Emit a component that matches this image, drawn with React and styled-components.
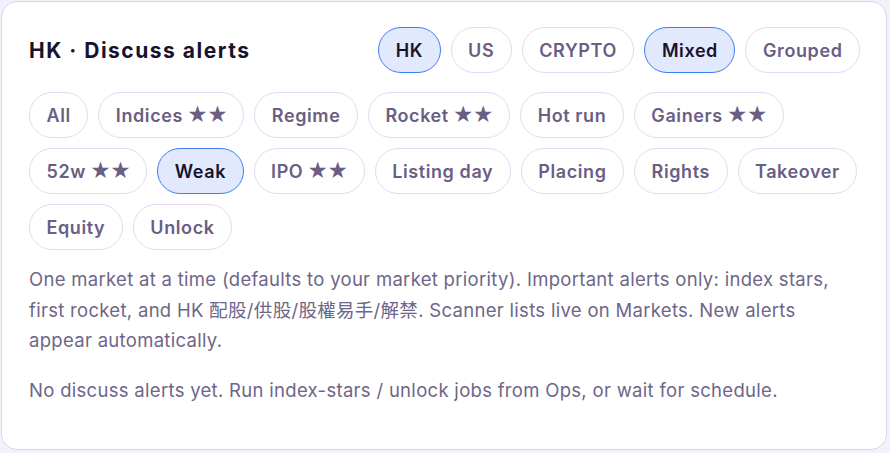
import React, { useState } from "react";
import styled, { createGlobalStyle } from "styled-components";

const colors = {
  page: "#f4f1fb",
  card: "#ffffff",
  cardBorder: "#ddd3f1",
  title: "#17132f",
  chipText: "#6a5e84",
  chipBorder: "#e3daf3",
  activeBg: "#e2e9fd",
  activeBorder: "#3d7ef5",
  activeText: "#17132f",
  body: "#6e6688",
};

const GlobalStyle = createGlobalStyle`
  html, body {
    margin: 0;
    padding: 0;
    background: ${colors.page};
  }
  body {
    padding: 1px 3px 3px 1px;
    font-family: Inter, "Noto Sans", "Noto Sans CJK TC", sans-serif;
  }
`;

const markets = ["HK", "US", "CRYPTO"];
const views = ["Mixed", "Grouped"];
// stars: true marks the two-star filters
const filters = [
  { label: "All" },
  { label: "Indices", stars: true },
  { label: "Regime" },
  { label: "Rocket", stars: true },
  { label: "Hot run" },
  { label: "Gainers", stars: true },
  { label: "52w", stars: true },
  { label: "Weak" },
  { label: "IPO", stars: true },
  { label: "Listing day" },
  { label: "Placing" },
  { label: "Rights" },
  { label: "Takeover" },
  { label: "Equity" },
  { label: "Unlock" },
];

const App = () => {
  const [market, setMarket] = useState("HK");
  const [view, setView] = useState("Mixed");
  const [filter, setFilter] = useState("Weak");

  return (
    <>
      <GlobalStyle />
      <Card>
        <Header>
          <Title>{market} · Discuss alerts</Title>
          <ChipRow>
            {markets.map((m) => (
              <Chip key={m} $active={m === market} onClick={() => setMarket(m)}>
                {m}
              </Chip>
            ))}
            {views.map((v) => (
              <Chip key={v} $active={v === view} onClick={() => setView(v)}>
                {v}
              </Chip>
            ))}
          </ChipRow>
        </Header>
        <FilterWrap>
          {filters.map((f) => (
            <Chip
              key={f.label}
              $active={f.label === filter}
              onClick={() => setFilter(f.label)}
            >
              {f.label}
              {f.stars && <Stars> ★★</Stars>}
            </Chip>
          ))}
        </FilterWrap>
        <Note>
          One market at a time (defaults to your market priority). Important
          alerts only: index stars, first rocket, and HK 配股/供股/股權易手/解禁.
          Scanner lists live on Markets. New alerts appear automatically.
        </Note>
        <Empty>
          No discuss alerts yet. Run index-stars / unlock jobs from Ops, or wait
          for schedule.
        </Empty>
      </Card>
    </>
  );
};

const Card = styled.div`
  box-sizing: border-box;
  width: 886px;
  height: 449px;
  background: ${colors.card};
  border: 1px solid ${colors.cardBorder};
  border-radius: 16px;
  padding: 25px 26px 0 27px;
`;

const Header = styled.div`
  display: flex;
  align-items: center;
  justify-content: space-between;
  margin-bottom: 19px;
`;

const Title = styled.h2`
  margin: 0;
  font-size: 21px;
  font-weight: 700;
  color: ${colors.title};
  letter-spacing: 1.5px;
`;

const ChipRow = styled.div`
  display: flex;
  gap: 10px;
`;

const FilterWrap = styled.div`
  display: flex;
  flex-wrap: wrap;
  gap: 10px;
  margin-bottom: 14px;
`;

const Chip = styled.button`
  box-sizing: border-box;
  height: 46px;
  padding: 0 16.5px;
  border-radius: 23px;
  border: 1.5px solid ${(p) => (p.$active ? colors.activeBorder : colors.chipBorder)};
  background: ${(p) => (p.$active ? colors.activeBg : "#fff")};
  color: ${(p) => (p.$active ? colors.activeText : colors.chipText)};
  font-family: inherit;
  font-size: 18px;
  font-weight: 600;
  letter-spacing: 0.6px;
  cursor: pointer;
  white-space: nowrap;
`;

const Stars = styled.span`
  font-size: 20px;
  letter-spacing: -1px;
`;

const Note = styled.p`
  margin: 0 0 19px;
  font-size: 18.5px;
  line-height: 30.5px;
  letter-spacing: 0.3px;
  color: ${colors.body};
`;

const Empty = styled(Note)`
  margin: 0;
`;

export default App;
